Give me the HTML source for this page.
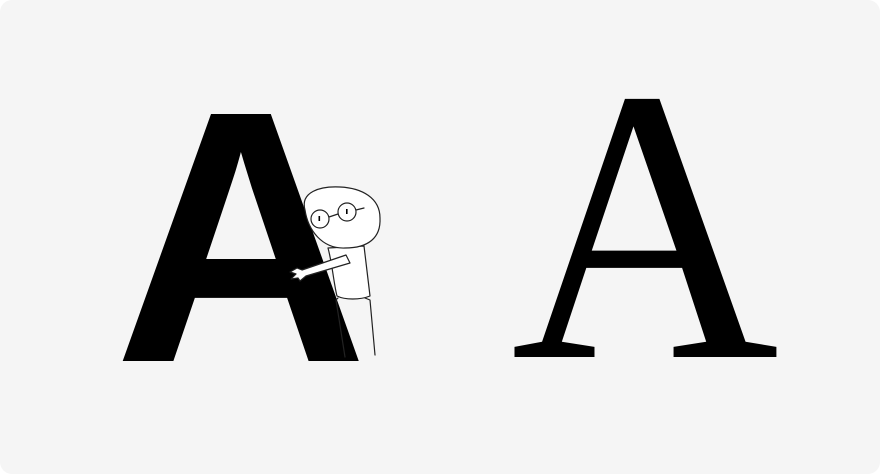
<!DOCTYPE html>
<html><head><meta charset="utf-8"><style>
html,body{margin:0;padding:0;background:#fff;}
.card{position:absolute;left:0;top:0;width:880px;height:474px;background:#f5f5f5;border-radius:12px;overflow:hidden;}
svg{position:absolute;left:0;top:0;}
</style></head><body>
<div class="card">
<svg width="880" height="474" viewBox="0 0 880 474">
<text x="241" y="361" text-anchor="middle" font-family="Liberation Sans, sans-serif" font-weight="bold" font-size="359" fill="#000" transform="translate(241 0) scale(0.98 1) translate(-241 0)">A</text>
<text x="645" y="357" text-anchor="middle" font-family="Liberation Serif, serif" font-size="391" fill="#000" transform="translate(645 0) scale(0.95 1) translate(-645 0)">A</text>
<g fill="#fff" stroke="#222" stroke-width="1.2" stroke-linecap="round" stroke-linejoin="round">
<path d="M338,298 L336,300 L345,357 M365,298 L370,300 L375,355" fill="none"/>
<path d="M328,248 C332,262 334,285 337,296 C345,300 360,300 370,296 C368,280 366,262 364,246 Z"/>
<path d="M305,210 C300,192 320,186 340,187 C362,188 380,198 380,218 C381,238 368,248 345,248 C322,249 308,230 305,210 Z"/>
<circle cx="320" cy="219" r="9"/>
<circle cx="347" cy="212" r="9"/>
<path d="M329,217 L338,214 M356,210 L364,208" fill="none"/>
<path d="M346,255 L302,270 L297,268 L290,272 L296,274 L291,279 L298,278 L300,281 L306,276 L350,263 Z"/>
</g>
<g fill="#000"><rect x="318.5" y="216" width="1.6" height="5"/><rect x="346" y="209" width="1.6" height="5"/></g>
</svg>
</div>
</body></html>
